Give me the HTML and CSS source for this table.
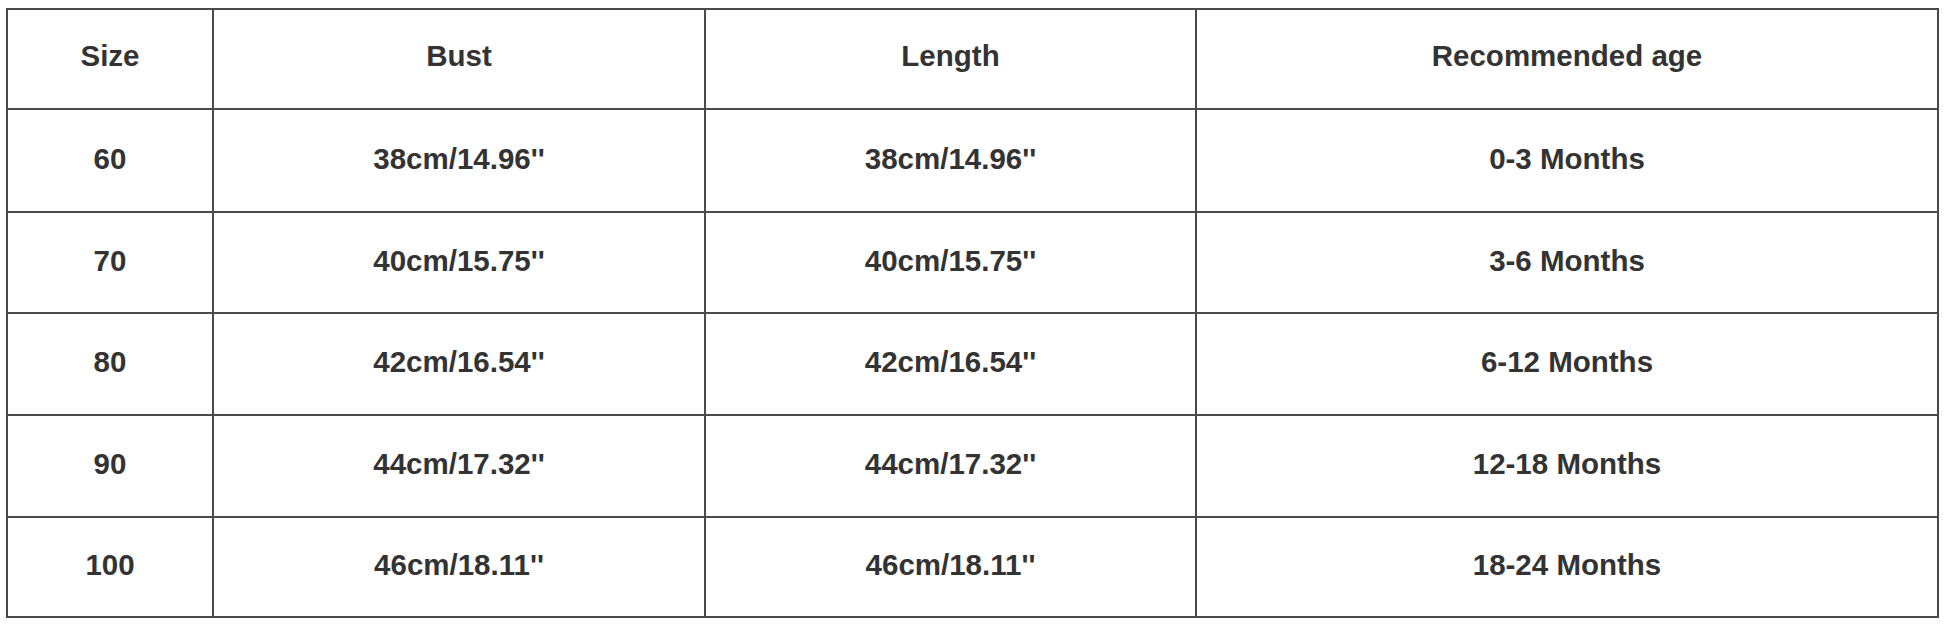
FILE: index.html
```html
<!DOCTYPE html>
<html>
<head>
<meta charset="utf-8">
<link rel="stylesheet" href="styles.css">
</head>
<body>
<table class="size-chart">
  <colgroup>
    <col class="c-size">
    <col class="c-bust">
    <col class="c-length">
    <col class="c-age">
  </colgroup>
  <thead>
    <tr class="r-head"><th>Size</th><th>Bust</th><th>Length</th><th>Recommended age</th></tr>
  </thead>
  <tbody>
    <tr class="r1"><td>60</td><td>38cm/14.96''</td><td>38cm/14.96''</td><td>0-3 Months</td></tr>
    <tr class="r2"><td>70</td><td>40cm/15.75''</td><td>40cm/15.75''</td><td>3-6 Months</td></tr>
    <tr class="r3"><td>80</td><td>42cm/16.54''</td><td>42cm/16.54''</td><td>6-12 Months</td></tr>
    <tr class="r4"><td>90</td><td>44cm/17.32''</td><td>44cm/17.32''</td><td>12-18 Months</td></tr>
    <tr class="r5"><td>100</td><td>46cm/18.11''</td><td>46cm/18.11''</td><td>18-24 Months</td></tr>
  </tbody>
</table>
</body>
</html>
```
FILE: styles.css
```css
html, body {
  margin: 0;
  background: #ffffff;
}
body {
  padding: 8px 0 0 6px;
  font-family: "Liberation Sans", Arial, sans-serif;
}
.size-chart {
  border-collapse: collapse;
  table-layout: fixed;
  width: 1931px;
}
.c-size { width: 206px; }
.c-bust { width: 492px; }
.c-length { width: 491px; }
.c-age { width: 742px; }
.size-chart th,
.size-chart td {
  border: 2px solid #4a4a4a;
  padding: 0 0 4px 0;
  text-align: center;
  vertical-align: middle;
  font-size: 29.5px;
  font-weight: bold;
  color: #333333;
  box-sizing: border-box;
}
.size-chart th {
  padding-bottom: 6px;
}
.r-head { height: 100px; }
.r1 { height: 103px; }
.r2 { height: 101px; }
.r3 { height: 102px; }
.r4 { height: 102px; }
.r5 { height: 100px; }
```
